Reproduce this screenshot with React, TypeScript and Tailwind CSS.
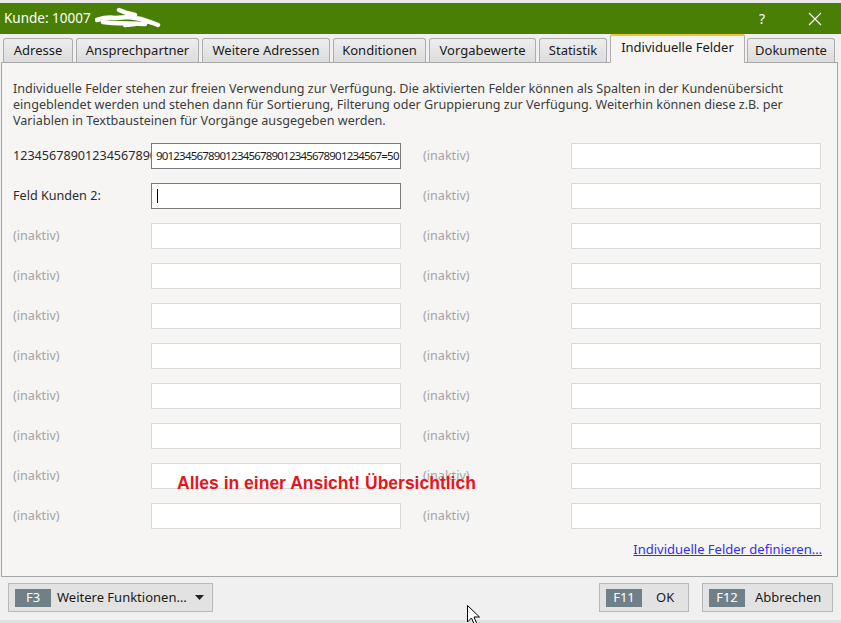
const font = { fontFamily: '"Noto Sans", "Open Sans", sans-serif' };

const tabs = [
  { label: 'Adresse', w: 'w-[70px]' },
  { label: 'Ansprechpartner', w: 'w-[123px]' },
  { label: 'Weitere Adressen', w: 'w-[128px]' },
  { label: 'Konditionen', w: 'w-[93px]' },
  { label: 'Vorgabewerte', w: 'w-[107px]' },
  { label: 'Statistik', w: 'w-[68px]' },
  { label: 'Individuelle Felder', w: 'w-[135px]', active: true },
  { label: 'Dokumente', w: 'w-[88px]' },
];

function Field({ active, value }: { active?: boolean; value?: string }) {
  return (
    <div
      className={`h-[26px] w-[250px] bg-white border px-[4px] flex items-center text-[11.5px] tracking-[-0.8px] text-[#1a1a1a] whitespace-nowrap overflow-hidden ${
        active ? 'border-[#7a7a7a]' : 'border-[#d9d9d9]'
      }`}
    >
      {value}
    </div>
  );
}

function Inaktiv() {
  return <span className="text-[12.6px] text-[#a4a4a4]">(inaktiv)</span>;
}

function FKey({ k }: { k: string }) {
  return (
    <span className="h-[18px] w-[36px] bg-[#6f8089] text-white text-[13px] flex items-center justify-center">
      {k}
    </span>
  );
}

export default function App() {
  const rows = Array.from({ length: 8 });

  return (
    <div className="relative w-[841px] h-[623px] overflow-hidden flex flex-col bg-[#f0f0f0]" style={font}>
      {/* window caption */}
      <div className="h-[3px] bg-[#e9e9e9]" />
      <div className="h-[31px] bg-[#4a7f05] flex items-center pl-[4px] text-white">
        <span className="text-[13.5px]">Kunde: 10007</span>
        <svg width="66" height="26" viewBox="0 0 66 26" className="ml-[4px]">
          <path
            d="M2 14 C8 12 14 11 20 12 M20 12 L34 11 L46 13 L58 17 L63 19 M8 16 C20 18 36 17 50 18 M24 4 L32 7 L40 9 M30 19 L40 18"
            stroke="white"
            strokeWidth="4.5"
            strokeLinecap="round"
            fill="none"
          />
        </svg>
        <span className="ml-auto mr-[43px] text-[14px]">?</span>
        <svg width="14" height="14" viewBox="0 0 14 14" className="mr-[19px]">
          <path d="M1 1 L13 13 M13 1 L1 13" stroke="white" strokeWidth="1.2" />
        </svg>
      </div>

      {/* tab strip */}
      <div className="h-[28px] flex items-end pl-[3px] gap-[3px] text-[13px] text-[#1a1a1a]">
        {tabs.map((t) =>
          t.active ? (
            <div
              key={t.label}
              className={`${t.w} h-[29px] -mb-[1px] -mr-[1px] relative z-10 bg-[#f6f5f3] border-x border-[#b0b0b0] border-t-2 border-t-[#f5c232] rounded-t-[2px] flex items-center justify-center pb-[3px]`}
            >
              {t.label}
            </div>
          ) : (
            <div
              key={t.label}
              className={`${t.w} h-[24px] bg-gradient-to-b from-[#eeeeee] to-[#dcdcdc] border border-b-0 border-[#adadad] rounded-t-[3px] flex items-center justify-center`}
            >
              {t.label}
            </div>
          ),
        )}
      </div>

      {/* tab page */}
      <div className="h-[515px] mx-[1px] w-[837px] bg-[#f6f5f3] border border-[#a8a8a8] flex flex-col pl-[11px] pt-[18px] text-[#2b2b2b]">
        <p className="text-[12.6px] leading-[16px] whitespace-nowrap text-[#3c3c3c]">
          Individuelle Felder stehen zur freien Verwendung zur Verfügung. Die aktivierten Felder können als Spalten in der Kundenübersicht
          <br />
          eingeblendet werden und stehen dann für Sortierung, Filterung oder Gruppierung zur Verfügung. Weiterhin können diese z.B. per
          <br />
          Variablen in Textbausteinen für Vorgänge ausgegeben werden.
        </p>

        <div className="mt-[7px] grid grid-cols-[138px_250px_22px_148px_250px] auto-rows-[40px] items-center">
          <div className="text-[12.6px] whitespace-nowrap overflow-hidden">12345678901234567890123456789</div>
          <Field active value="901234567890123456789012345678901234567=50" />
          <div />
          <Inaktiv />
          <Field />

          <div className="text-[12.6px]">Feld Kunden 2:</div>
          <div className="h-[26px] w-[250px] bg-white border border-[#7a7a7a] flex items-center pl-[5px]">
            <span className="w-px h-[14px] bg-black" />
          </div>
          <div />
          <Inaktiv />
          <Field />

          {rows.map((_, i) => (
            <div key={i} className="contents">
              <Inaktiv />
              <Field />
              <div />
              <Inaktiv />
              <Field />
            </div>
          ))}
        </div>

        <div className="mt-[4px] mr-[15px] self-end text-[13px] text-[#2f2ff5] underline">
          Individuelle Felder definieren…
        </div>
      </div>

      {/* bottom button bar */}
      <div className="flex-1 flex items-center px-[8px] pb-[2px] text-[13px] text-[#1a1a1a] border-b-[3px] border-[#e0e0e0]">
        <div className="h-[29px] w-[205px] bg-[#e2e2e2] border border-[#b9b9b9] flex items-center pl-[6px] gap-[6px]">
          <FKey k="F3" />
          <span>Weitere Funktionen…</span>
          <svg width="9" height="6" viewBox="0 0 9 6" className="ml-[2px]">
            <path d="M0 0 L9 0 L4.5 5 Z" fill="#222" />
          </svg>
        </div>
        <div className="ml-auto h-[29px] w-[90px] bg-[#e2e2e2] border border-[#b9b9b9] flex items-center pl-[6px] gap-[14px]">
          <FKey k="F11" />
          <span>OK</span>
        </div>
        <div className="ml-[13px] h-[29px] w-[131px] bg-[#e2e2e2] border border-[#b9b9b9] flex items-center pl-[6px] gap-[10px]">
          <FKey k="F12" />
          <span>Abbrechen</span>
        </div>
      </div>

      {/* annotation over the form */}
      <div
        className="absolute left-[177px] top-[472px] text-[17.5px] leading-[22px] font-bold text-[#e8141c] whitespace-nowrap"
        style={{ fontFamily: '"Liberation Sans", Arial, sans-serif' }}
      >
        Alles in einer Ansicht! Übersichtlich
      </div>

      {/* mouse pointer */}
      <svg width="14" height="22" viewBox="0 0 14 22" className="absolute left-[467px] top-[605px]">
        <path d="M0.5 0.5 L0.5 17 L4.5 13 L7.5 20 L10 19 L7 12 L12.5 12 Z" fill="white" stroke="black" strokeWidth="1" />
      </svg>
    </div>
  );
}
